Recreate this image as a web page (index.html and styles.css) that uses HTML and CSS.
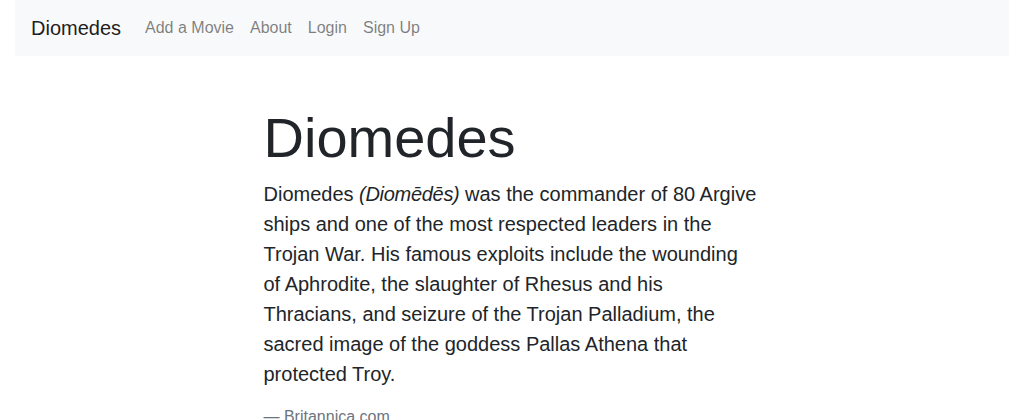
FILE: index.html
```html
<!DOCTYPE html>
<html lang="en">
<head>
<meta charset="utf-8">
<title>Diomedes</title>
<link rel="stylesheet" href="styles.css">
</head>
<body>
<div class="page">
  <nav class="navbar">
    <a class="brand" href="#">Diomedes</a>
    <ul class="nav">
      <li><a href="#">Add a Movie</a></li>
      <li><a href="#">About</a></li>
      <li><a href="#">Login</a></li>
      <li><a href="#">Sign Up</a></li>
    </ul>
  </nav>
  <main class="content">
    <h1 class="title">Diomedes</h1>
    <blockquote class="quote">
      <p>Diomedes <em class="translit">(Diomēdēs)</em> was the commander of 80 Argive ships and one of the most respected leaders in the Trojan War. His famous exploits include the wounding of Aphrodite, the slaughter of Rhesus and his Thracians, and seizure of the Trojan Palladium, the sacred image of the goddess Pallas Athena that protected Troy.</p>
      <footer class="source">— Britannica.com</footer>
    </blockquote>
  </main>
</div>
</body>
</html>
```
FILE: styles.css
```css
* { box-sizing: border-box; }
html, body { margin: 0; padding: 0; }
body {
  font-family: "Liberation Sans", Arial, sans-serif;
  font-size: 16px;
  line-height: 1.5;
  color: #212529;
  background: #fff;
}
.page {
  margin: 0 15px;
}
.navbar {
  display: flex;
  align-items: center;
  height: 56px;
  padding: 8px 16px;
  background: #f8f9fa;
}
.brand {
  font-size: 20px;
  line-height: 30px;
  padding: 5px 0;
  margin-right: 16px;
  color: rgba(0,0,0,.9);
  text-decoration: none;
}
.nav {
  display: flex;
  list-style: none;
  margin: 0;
  padding: 0;
}
.nav a {
  display: block;
  padding: 8px;
  color: rgba(0,0,0,.5);
  text-decoration: none;
  font-size: 16px;
  line-height: 24px;
}
.content {
  margin-left: 248.5px;
  width: 495px;
  padding-top: 48px;
}
.title {
  font-size: 56px;
  font-weight: 400;
  line-height: 1.2;
  margin: 0 0 8px;
}
.quote {
  margin: 0;
  font-size: 20px;
  line-height: 30px;
}
.quote p {
  margin: 0 0 16px;
}
.translit {
  letter-spacing: -0.3px;
}
.source {
  font-size: 16px;
  line-height: 24px;
  color: #6c757d;
}
```
